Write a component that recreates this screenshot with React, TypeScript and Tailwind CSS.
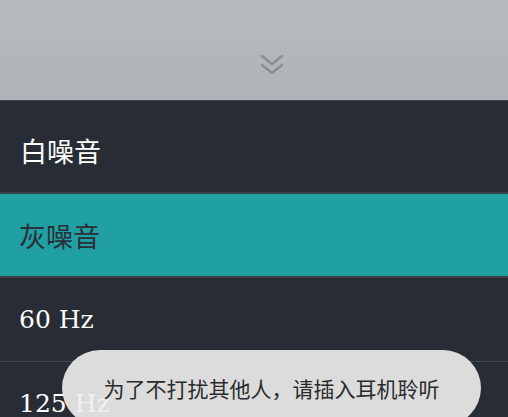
export default function App() {
  const cjk = { fontFamily: '"Noto Sans CJK SC", "Noto Sans", sans-serif' }
  const serif = { fontFamily: '"DejaVu Serif", "Liberation Serif", serif' }

  return (
    <div className="relative w-[508px] h-[417px] overflow-hidden bg-[#282c34]">
      <div className="h-[100px] bg-gradient-to-b from-[#b7babf] to-[#afb2b7] flex items-end justify-center pb-[22px]">
        <svg width="26" height="26" viewBox="0 0 26 26" fill="none" stroke="#8b8f95" strokeWidth="2.6" strokeLinecap="round" strokeLinejoin="round" className="ml-[36px]">
          <path d="M3 4l10 8 10-8" />
          <path d="M3 13l10 8 10-8" />
        </svg>
      </div>
      <div className="border-t border-[#3a3e45]" />
      <div className="h-[93px] flex items-center pl-5 pt-2 border-b-2 border-[#3d4148]">
        <span className="text-white text-[27px] leading-none" style={cjk}>白噪音</span>
      </div>
      <div className="h-[84px] flex items-center pl-[19px] bg-[#20a0a3] border-b-2 border-[#3d4148]">
        <span className="text-[#2a2e36] text-[27px] leading-none" style={cjk}>灰噪音</span>
      </div>
      <div className="h-[84px] flex items-center pl-[19px] border-b border-[#43474d]">
        <span className="text-white text-[25px] leading-none" style={serif}>60 Hz</span>
      </div>
      <div className="h-[84px] flex items-start pl-[19px] pt-[29px]">
        <span className="text-white text-[25px] leading-none" style={serif}>125 Hz</span>
      </div>
      {/* toast is slightly see-through, the row label shows under it */}
      <div className="absolute left-[62px] top-[350px] w-[419px] h-[76px] rounded-[38px] bg-[#f0f0f0]/90 flex items-center justify-center">
        <span className="text-[#2b2b2b] text-[21px] leading-none" style={cjk}>为了不打扰其他人，请插入耳机聆听</span>
      </div>
    </div>
  )
}
